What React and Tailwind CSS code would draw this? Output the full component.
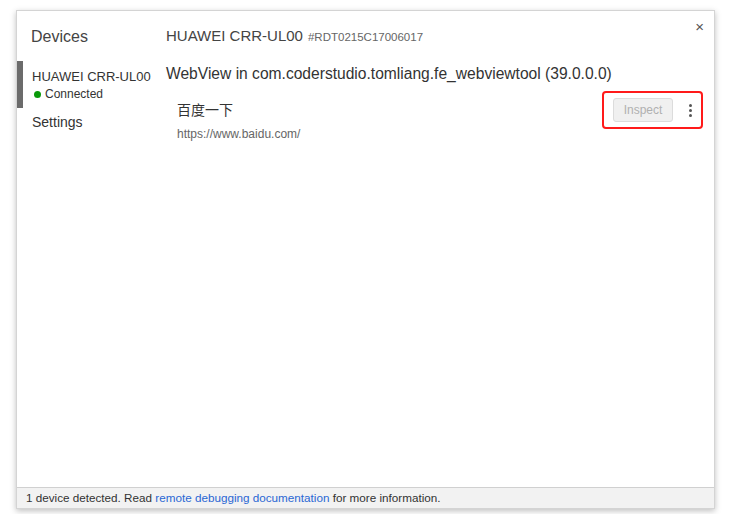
export default function App() {
  return (
    <div className="h-[514px] w-[731px] bg-white pl-4 pt-[10px] font-['Liberation_Sans',Arial,sans-serif] text-[#333]">
      <div className="flex h-[499px] w-[699px] flex-col border border-[#d4d4d4] bg-white shadow-[0_2px_6px_rgba(0,0,0,0.25)]">
        <div className="flex flex-1">
          {/* sidebar */}
          <div className="w-[149px] shrink-0">
            <div className="pl-[14px] pt-[15px] text-[16px] leading-[22px] text-[#444]">Devices</div>
            <div className="mt-[13px] border-l-[6px] border-[#6b6b6b] pl-[9px] pt-[7px] pb-[6px]">
              <div className="text-[13px] leading-[17px] text-[#333]">HUAWEI CRR-UL00</div>
              <div className="flex items-center gap-[4px] pl-[2px] pt-[1px] text-[12px] leading-[16px] text-[#333]">
                <span className="h-[7px] w-[7px] rounded-full bg-[#0a9a0a]" />
                Connected
              </div>
            </div>
            <div className="pl-[15px] pt-[5px] text-[14px] leading-[18px] text-[#333]">Settings</div>
          </div>

          {/* main */}
          <div className="flex-1 pr-[12px]">
            <div className="flex items-start justify-between pt-[14px]">
              <div className="flex items-baseline gap-[5px]">
                <span className="text-[15px] leading-[22px] text-[#444]">HUAWEI CRR-UL00</span>
                <span className="text-[11.5px] text-[#666]">#RDT0215C17006017</span>
              </div>
              <span className="-mr-[2px] -mt-[8px] text-[15px] leading-[20px] text-[#555]">×</span>
            </div>
            <div className="mt-[17px] text-[15.6px] leading-[20px] text-[#333]">
              WebView in com.coderstudio.tomliang.fe_webviewtool (39.0.0.0)
            </div>
            <div className="mt-[7px] flex items-start justify-between pl-[11px]">
              <div>
                <div className="pt-[9px] font-['Noto_Sans_CJK_SC',sans-serif] text-[14px] leading-[18px] text-[#333]">百度一下</div>
                <div className="mt-[9px] text-[12px] leading-[14px] text-[#666]">https://www.baidu.com/</div>
              </div>
              <div className="-mr-[1px] flex items-center gap-[16px] rounded-[4px] border-[2.5px] border-[#ff1a1a] py-[5px] pl-[9px] pr-[9px]">
                <div className="flex h-[24px] w-[60px] items-center justify-center rounded-[3px] border border-[#dcdcdc] bg-[#f0f0f0] text-[12px] text-[#b0b0b0]">
                  Inspect
                </div>
                <div className="flex flex-col gap-[2px]">
                  <span className="h-[3px] w-[3px] rounded-full bg-[#555]" />
                  <span className="h-[3px] w-[3px] rounded-full bg-[#555]" />
                  <span className="h-[3px] w-[3px] rounded-full bg-[#555]" />
                </div>
              </div>
            </div>
          </div>
        </div>

        {/* footer */}
        <div className="h-[21px] border-t border-[#d0d0d0] bg-[#f2f2f2] pl-[9px] text-[11.7px] leading-[20px] text-[#333]">
          1 device detected. Read <span className="text-[#2a67d4]">remote debugging documentation</span> for more information.
        </div>
      </div>
    </div>
  );
}
